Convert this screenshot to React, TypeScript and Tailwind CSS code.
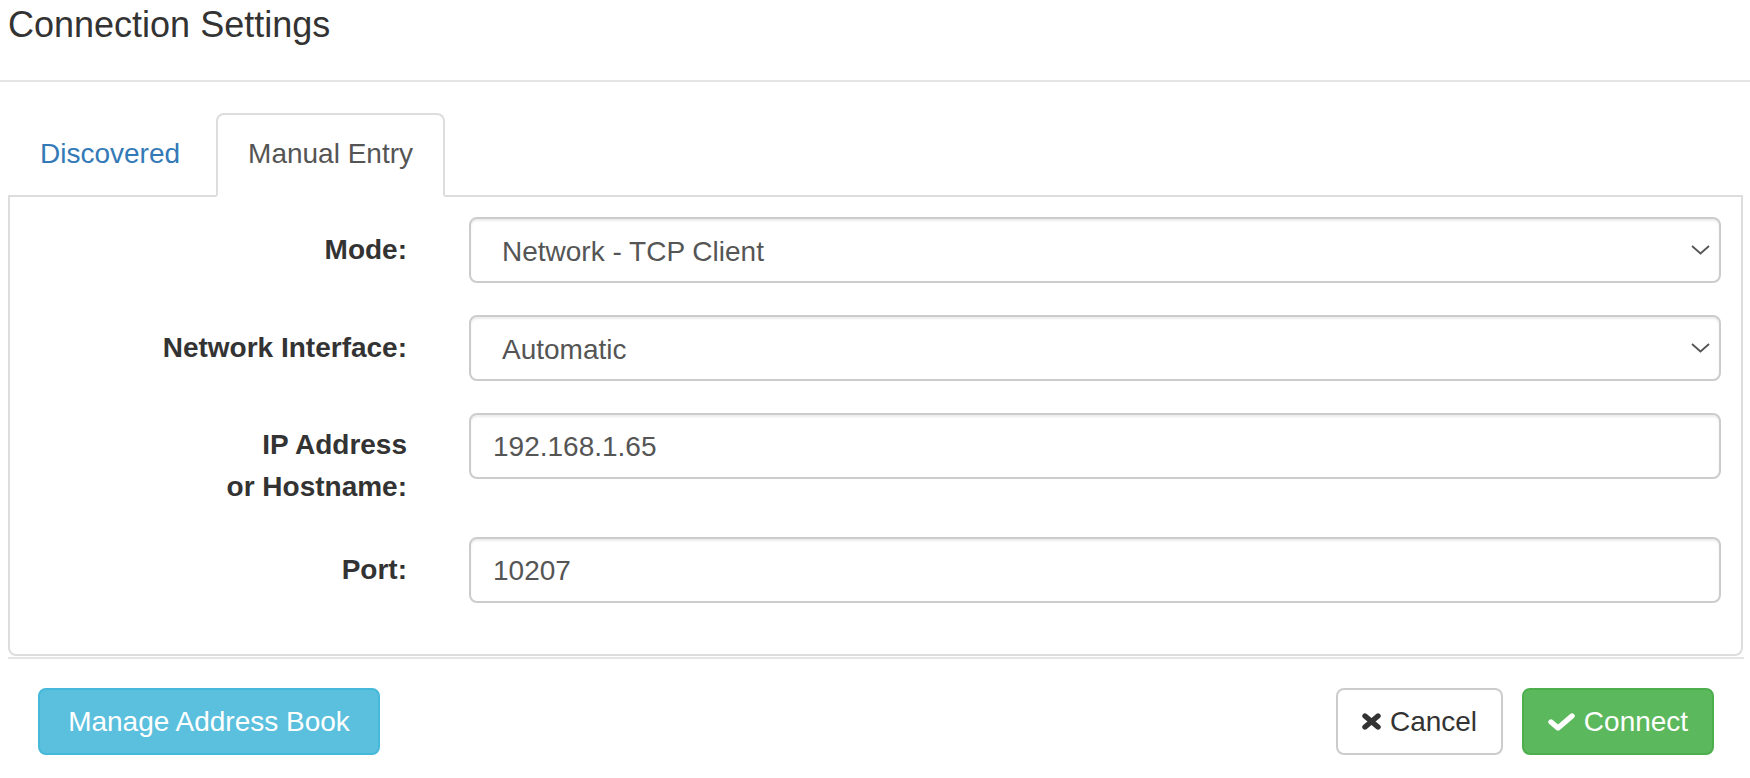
import React from "react";

function Chevron() {
  return (
    <svg width="19" height="10" viewBox="0 0 19 10" className="absolute right-[9px] top-1/2 -translate-y-1/2">
      <polyline points="1,1 9.5,8.5 18,1" fill="none" stroke="#555" strokeWidth="1.8" />
    </svg>
  );
}

function SelectBox({ value }: { value: string }) {
  return (
    <div className="relative flex-1 h-[66px] border-2 border-[#ccc] rounded-[8px] bg-white shadow-[inset_0_2px_2px_rgba(0,0,0,0.075)] flex items-center pl-[31px] text-[28px] text-[#555] leading-[39px] pt-[3px]">
      {value}
      <Chevron />
    </div>
  );
}

function InputBox({ value }: { value: string }) {
  return (
    <div className="flex-1 h-[66px] border-2 border-[#ccc] rounded-[8px] bg-white shadow-[inset_0_2px_2px_rgba(0,0,0,0.075)] flex items-center pl-[22px] text-[28px] text-[#555] leading-[39px]">
      {value}
    </div>
  );
}

function Row({ label, children, tall }: { label: React.ReactNode; children: React.ReactNode; tall?: boolean }) {
  return (
    <div className="flex items-start">
      <div
        className={
          tall
            ? "w-[397px] text-right font-bold text-[28px] leading-[42px] text-[#333] pt-[11px] -mb-[3px] shrink-0"
            : "w-[397px] text-right font-bold text-[28px] leading-[39px] text-[#333] pt-[13px] shrink-0"
        }
      >
        {label}
      </div>
      <div className="flex-1 flex pl-[62px]">{children}</div>
    </div>
  );
}

export default function App() {
  return (
    <div className="w-[1750px] h-[778px] bg-white text-[#333] font-['Liberation_Sans',Arial,sans-serif] overflow-hidden">
      {/* Header */}
      <div className="h-[82px] border-b-2 border-[#e5e5e5] pl-[8px] pt-[5px]">
        <h4 className="text-[36px] leading-[40px] font-normal text-[#333]">Connection Settings</h4>
      </div>

      {/* Body */}
      <div className="pl-[8px] pr-[7px] pt-[31px]">
        {/* Tabs */}
        <div className="flex items-end relative z-10 -mb-[2px]">
          <div className="border-2 border-transparent px-[30px] pt-[19px] pb-[21px] mr-[4px] text-[28px] leading-[40px] text-[#337ab7]">
            Discovered
          </div>
          <div className="border-2 border-[#ddd] border-b-white rounded-t-[8px] bg-white px-[30px] pt-[19px] pb-[21px] text-[28px] leading-[40px] text-[#555]">
            Manual Entry
          </div>
        </div>
        {/* Tab content */}
        <div className="border-2 border-[#ddd] rounded-b-[8px] pt-[20px] pb-[51px] pr-[20px] flex flex-col gap-[32px]">
          <Row label="Mode:">
            <SelectBox value="Network - TCP Client" />
          </Row>
          <Row label="Network Interface:">
            <SelectBox value="Automatic" />
          </Row>
          <Row
            tall
            label={
              <>
                IP Address
                <br />
                or Hostname:
              </>
            }
          >
            <InputBox value="192.168.1.65" />
          </Row>
          <Row label="Port:">
            <InputBox value="10207" />
          </Row>
        </div>
      </div>

      {/* Footer */}
      <div className="mx-[8px] mr-[6px] mt-[1px] h-[2px] bg-[#e5e5e5]" />
      <div className="flex justify-between items-center pl-[38px] pr-[36px] pt-[29px]">
        <button className="w-[342px] h-[67px] rounded-[8px] bg-[#5bc0de] border-2 border-[#46b8da] text-white text-[28px] leading-[39px] flex items-center justify-center">
          Manage Address Book
        </button>
        <div className="flex items-center gap-[19px]">
          <button className="w-[167px] h-[67px] rounded-[8px] bg-white border-2 border-[#ccc] text-[#333] text-[28px] leading-[39px] flex items-center justify-center gap-[9px]">
            <svg width="19" height="17" viewBox="0 0 19 17">
              <path d="M3 3 L16 14 M16 3 L3 14" stroke="#333" strokeWidth="5.4" strokeLinecap="round" fill="none" />
            </svg>
            <span>Cancel</span>
          </button>
          <button className="w-[192px] h-[67px] rounded-[8px] bg-[#5cb85c] border-2 border-[#4cae4c] text-white text-[28px] leading-[39px] flex items-center justify-center gap-[9px]">
            <svg width="27" height="18" viewBox="0 0 27 18">
              <path d="M3 9 L10 15 L24 3" stroke="#fff" strokeWidth="5.4" strokeLinecap="round" strokeLinejoin="round" fill="none" />
            </svg>
            <span>Connect</span>
          </button>
        </div>
      </div>
    </div>
  );
}
